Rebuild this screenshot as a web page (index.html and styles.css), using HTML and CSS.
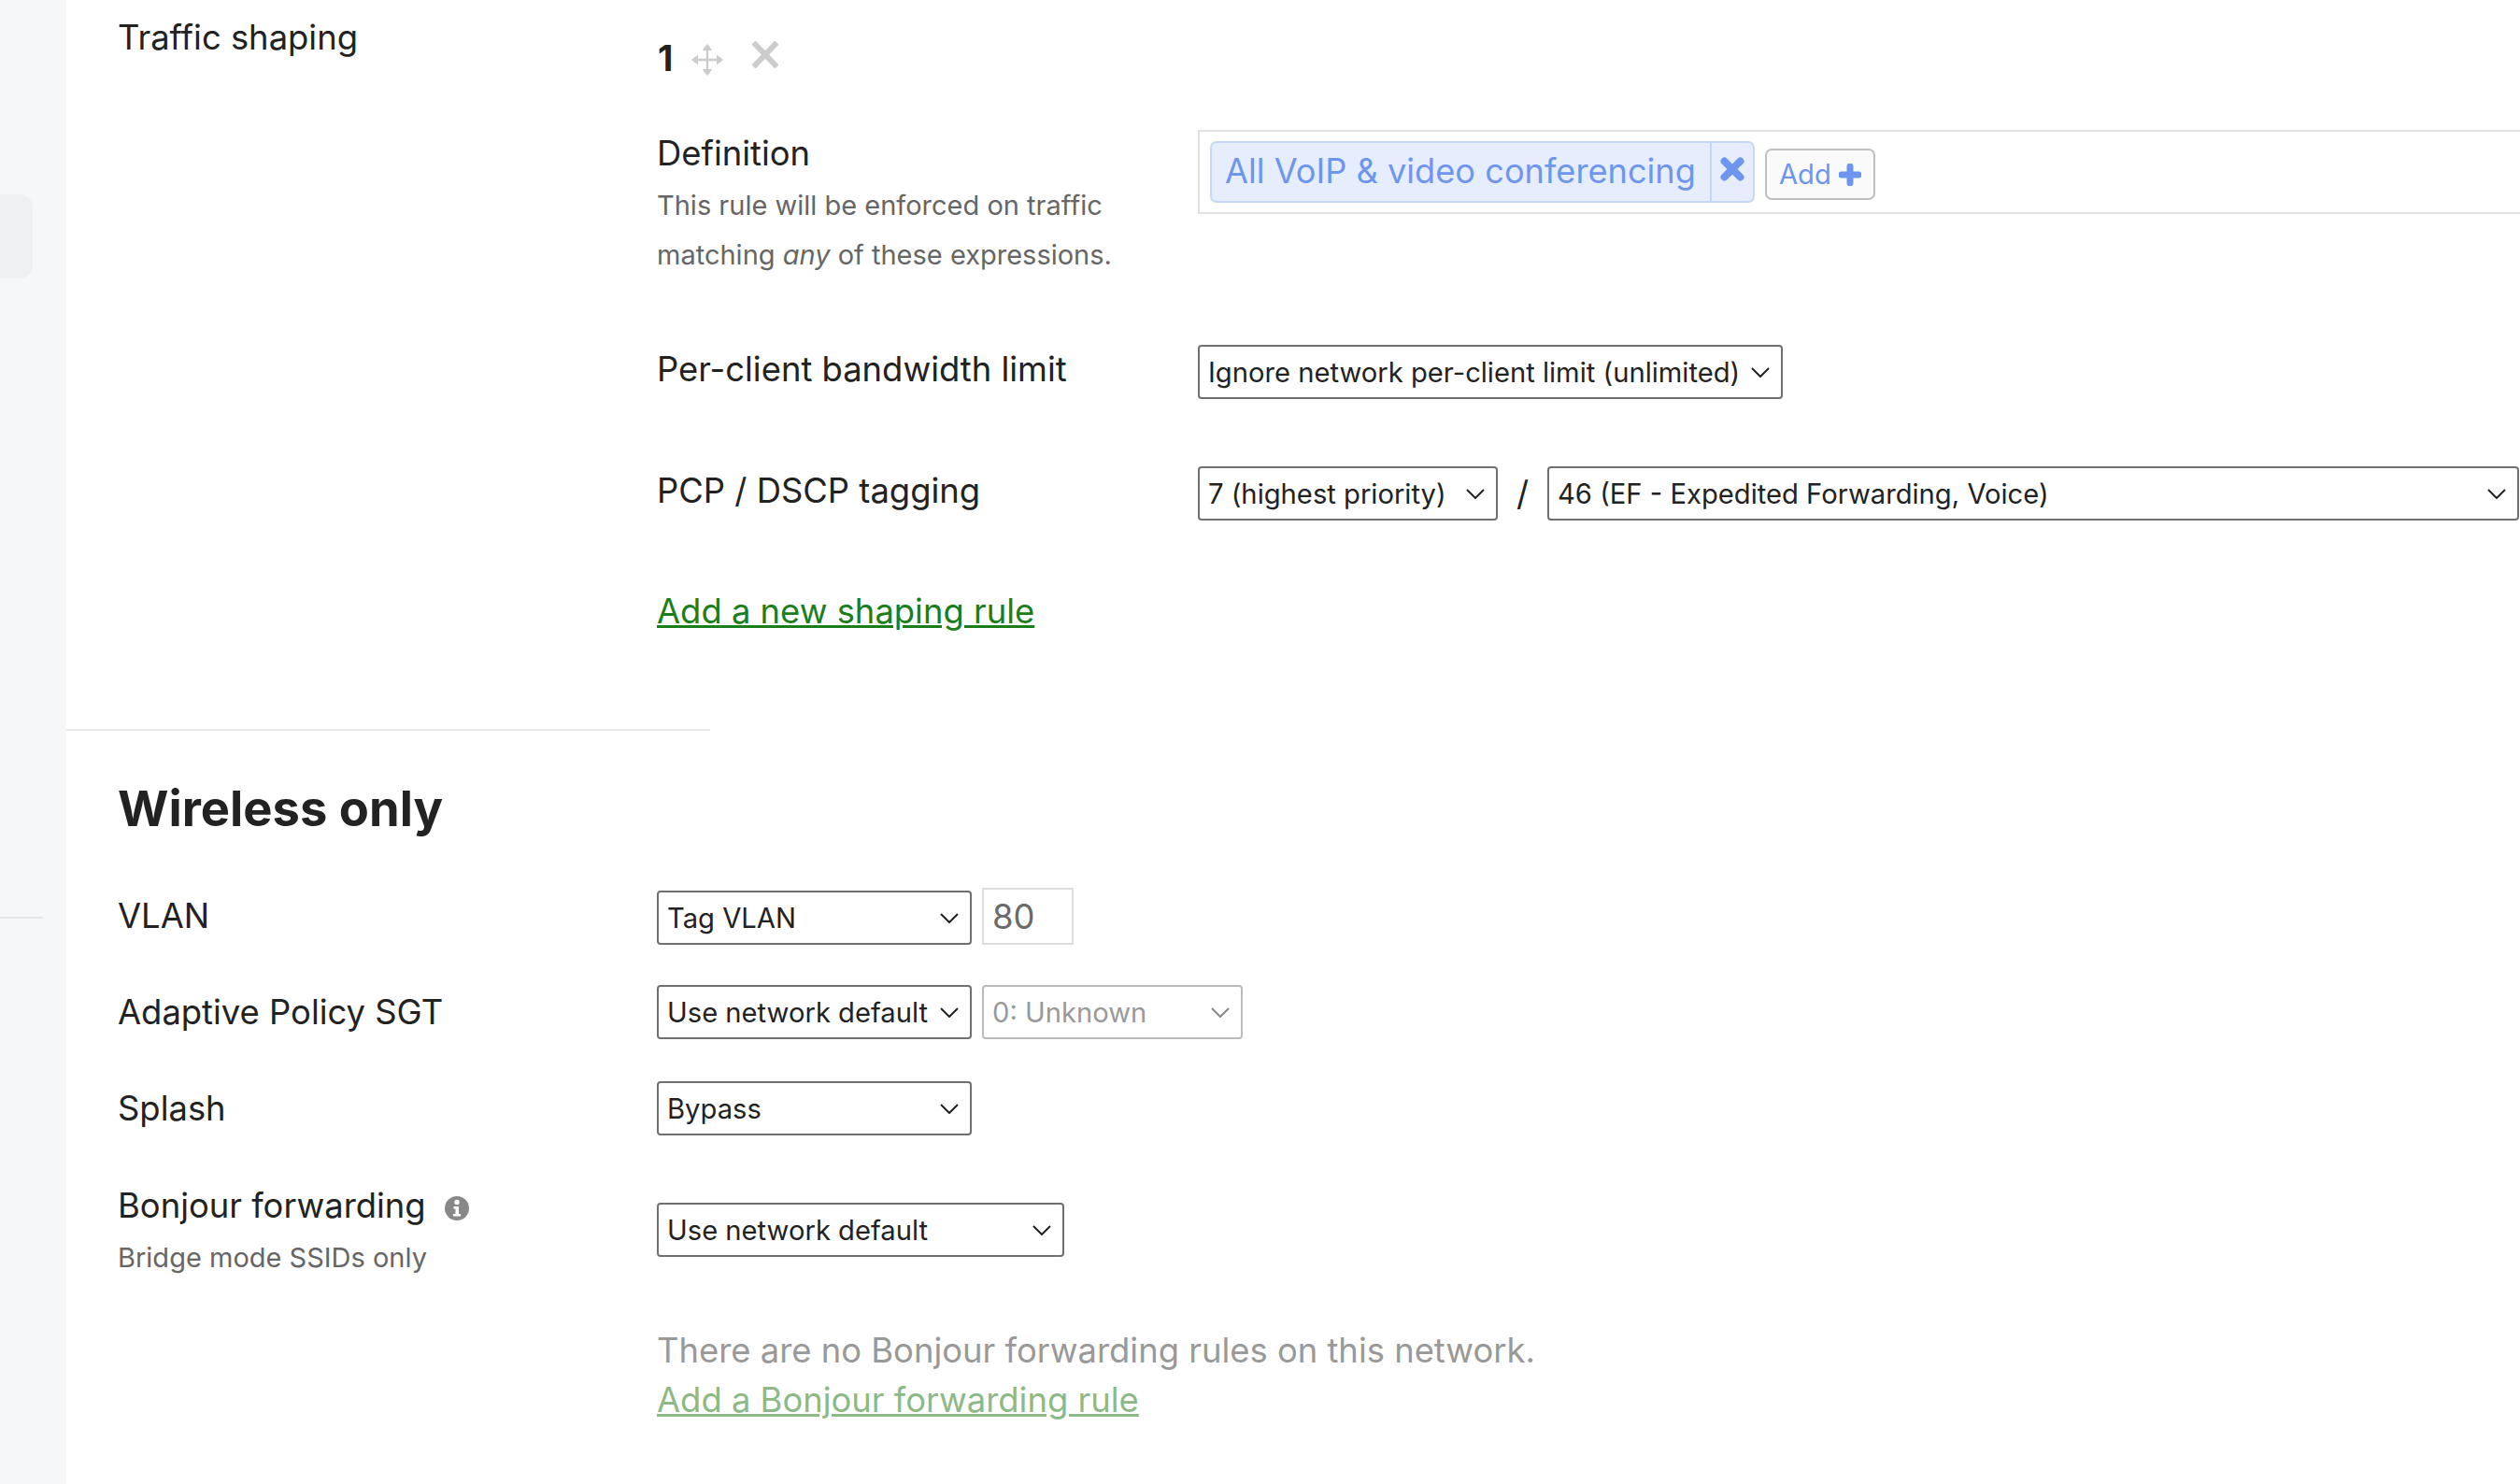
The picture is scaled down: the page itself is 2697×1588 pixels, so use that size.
FILE: index.html
```html
<!DOCTYPE html>
<html lang="en">

<head>
    <meta charset="UTF-8">
    <meta name="viewport" content="width=device-width, initial-scale=1.0">
    <title>Traffic shaping</title>
    <link rel="stylesheet" href="styles.css">
</head>

<body>
    <aside class="sidebar">
        <div class="sidebar-pill"></div>
        <div class="sidebar-line"></div>
    </aside>
    <main class="content">
        <section class="shaping">
            <h3 class="label">Traffic shaping</h3>
            <div class="rule">
                <div class="rule-head">
                    <b class="rule-num">1</b>
                    <svg class="icon-move" viewBox="0 0 34 34" aria-hidden="true">
                        <path d="M17 3v28M3 17h28" stroke="#ccc" stroke-width="2.4" fill="none" />
                        <path d="M17 0l5.500 7h-11zM17 34l5.500-7h-11zM0 17l7-5.500v11zM34 17l-7-5.500v11z" fill="#ccc" />
                    </svg>
                    <svg class="icon-remove" viewBox="0 0 28 29" aria-hidden="true">
                        <path d="M1.500 1.500l25 26M26.500 1.500l-25 26" stroke="#ccc" stroke-width="6" fill="none" />
                    </svg>
                </div>

                <div class="rule-row rule-row-def">
                    <div>
                        <div class="rule-title">Definition</div>
                        <p class="rule-help">This rule will be enforced on traffic<br>matching <i>any</i> of these expressions.</p>
                    </div>
                    <div class="def-box">
                        <span class="chip">
                            <span class="chip-text">All VoIP &amp; video conferencing</span>
                            <span class="chip-close">
                                <svg viewBox="0 0 26 26" aria-hidden="true">
                                    <path d="M4.500 4.500l17 17M21.500 4.500l-17 17" stroke="#6f96ef" stroke-width="8" stroke-linecap="round" fill="none" />
                                </svg>
                            </span>
                        </span>
                        <button class="add-btn" type="button">Add
                            <svg viewBox="0 0 24 24" aria-hidden="true">
                                <path d="M12 3v18M3 12h18" stroke="#6f96ef" stroke-width="7" stroke-linecap="round" fill="none" />
                            </svg>
                        </button>
                    </div>
                </div>

                <div class="rule-row">
                    <div class="rule-title rule-title-sel">Per-client bandwidth limit</div>
                    <div>
                        <select class="sel sel-limit">
                            <option>Ignore network per-client limit (unlimited)</option>
                        </select>
                    </div>
                </div>

                <div class="rule-row">
                    <div class="rule-title rule-title-sel">PCP / DSCP tagging</div>
                    <div class="tagging">
                        <select class="sel sel-pcp">
                            <option>7 (highest priority)</option>
                        </select>
                        <span class="slash">/</span>
                        <select class="sel sel-dscp">
                            <option>46 (EF - Expedited Forwarding, Voice)</option>
                        </select>
                    </div>
                </div>

                <a class="add-link" href="#">Add a new shaping rule</a>
            </div>
        </section>

        <hr class="divider">

        <section class="wireless">
            <h2>Wireless only</h2>

            <div class="form-row form-row-vlan">
                <div class="label label-vlan">VLAN</div>
                <div class="controls">
                    <select class="sel sel-short">
                        <option>Tag VLAN</option>
                    </select>
                    <input class="vlan-input" type="text" value="80">
                </div>
            </div>

            <div class="form-row form-row-sgt">
                <div class="label label-sel">Adaptive Policy SGT</div>
                <div class="controls">
                    <select class="sel sel-short">
                        <option>Use network default</option>
                    </select>
                    <select class="sel sel-sgt" disabled>
                        <option>0: Unknown</option>
                    </select>
                </div>
            </div>

            <div class="form-row form-row-splash">
                <div class="label label-sel">Splash</div>
                <div class="controls">
                    <select class="sel sel-short">
                        <option>Bypass</option>
                    </select>
                </div>
            </div>

            <div class="form-row">
                <div>
                    <div class="label">Bonjour forwarding
                        <svg class="icon-info" viewBox="0 0 26 26" aria-hidden="true">
                            <circle cx="13" cy="13" r="13" fill="#888" />
                            <circle cx="13" cy="6.500" r="2.700" fill="#fff" />
                            <path d="M9.500 11h5.500v8h2v2.500H9v-2.500h2.500v-5.500h-2z" fill="#fff" />
                        </svg>
                    </div>
                    <div class="label-help">Bridge mode SSIDs only</div>
                </div>
                <div>
                    <select class="sel sel-bonjour">
                        <option>Use network default</option>
                    </select>
                    <p class="no-rules">There are no Bonjour forwarding rules on this network.<br><a href="#">Add a Bonjour forwarding rule</a></p>
                </div>
            </div>
        </section>
    </main>
</body>

</html>
```

FILE: styles.css
```css
html {
    box-sizing: border-box;
    font-family: Inter, "Noto Sans", sans-serif;
    font-size: 36.4px;
}

*,
*:before,
*:after {
    box-sizing: inherit;
}

body {
    margin: 0;
    height: 100vh;
    display: flex;
    overflow: hidden;
    background-color: #fff;
    color: #222;
}

.sidebar {
    flex: 0 0 71px;
    padding-top: 208px;
    background-color: #f6f7f8;
}

.sidebar-pill {
    width: 35px;
    height: 90px;
    background-color: #eef0f2;
    border-radius: 0 14px 14px 0;
}

.sidebar-line {
    width: 46px;
    height: 2px;
    margin-top: 683px;
    background-color: #e4e8ec;
}

.content {
    flex: 1;
    min-width: 0;
}

.label,
.rule-title {
    font-size: 36.4px;
    font-weight: 400;
    line-height: 50px;
    margin: 0;
}

.shaping {
    display: grid;
    grid-template-columns: 577px 1fr;
    height: 780px;
    padding: 15px 0 0 55px;
}

.rule-head {
    display: flex;
    align-items: center;
    height: 94px;
    margin-bottom: 30px;
}

.rule-num {
    font-size: 38px;
    font-weight: 700;
    padding-left: 1px;
}

.icon-move {
    width: 34px;
    height: 34px;
    margin: 3px 0 0 20px;
}

.icon-remove {
    width: 28px;
    height: 29px;
    margin: -8px 0 0 31px;
}

.rule-row {
    display: grid;
    grid-template-columns: 579px 1fr;
    margin-bottom: 72px;
}

.rule-row-def {
    margin-bottom: 70px;
}

.rule-title-sel {
    margin-top: 1px;
}

.rule-help {
    margin: 4px 0 0;
    font-size: 29px;
    line-height: 53px;
    color: #666;
}

.def-box {
    display: flex;
    align-items: flex-start;
    height: 90px;
    padding: 10px 0 0 11px;
    border: 2px solid #e0e0e0;
    border-right: 0;
}

.chip {
    display: flex;
    height: 66px;
    background-color: #e6eefd;
    border: 2px solid #c5d8fb;
    border-radius: 7px;
    color: #6f96ef;
}

.chip-text {
    padding: 0 15px 0 14px;
    font-size: 36.2px;
    line-height: 60px;
}

.chip-close {
    width: 46px;
    padding: 15px 0 0 9px;
    border-left: 2px solid #c5d8fb;
}

.chip-close svg {
    display: block;
    width: 26px;
    height: 26px;
}

.add-btn {
    display: flex;
    align-items: center;
    gap: 8px;
    height: 55px;
    margin: 8px 0 0 11px;
    padding: 0 13px;
    background-color: #fafafa;
    border: 2px solid #c0c0c0;
    border-radius: 7px;
    font: inherit;
    font-size: 29.2px;
    color: #6f96ef;
}

.add-btn svg {
    width: 24px;
    height: 24px;
}

.sel {
    display: block;
    height: 58px;
    padding: 0 40px 0 9px;
    border: 2px solid #707070;
    border-radius: 4px;
    appearance: none;
    font: inherit;
    font-size: 29.2px;
    color: #222;
    background: #fff url("data:image/svg+xml,%3Csvg xmlns='http://www.w3.org/2000/svg' viewBox='0 0 20 11'%3E%3Cpath d='M1 1l9 9 9-9' fill='none' stroke='%23222' stroke-width='2'/%3E%3C/svg%3E") no-repeat right 12px center / 20px 11px;
}

.sel-limit {
    width: 626px;
}

.tagging {
    display: flex;
    align-items: center;
}

.sel-pcp {
    width: 321px;
}

.slash {
    width: 53px;
    text-align: center;
    font-size: 36.4px;
}

.sel-dscp {
    width: 1040px;
}

.add-link {
    font-size: 36.4px;
    line-height: 50px;
    color: #1a7f1a;
}

.divider {
    width: 689px;
    height: 2px;
    margin: 0;
    border: 0;
    background-color: #eaeaea;
}

.wireless {
    padding: 53px 0 0 55px;
}

.wireless h2 {
    margin: 0 0 58px;
    font-size: 52.5px;
    font-weight: 700;
    line-height: 60px;
}

.form-row {
    display: grid;
    grid-template-columns: 577px 1fr;
}

.form-row-vlan {
    margin-bottom: 43px;
}

.form-row-sgt {
    margin-bottom: 45px;
}

.form-row-splash {
    margin-bottom: 50px;
}

.label-vlan {
    margin-top: 2px;
}

.label-sel {
    margin-top: 4px;
}

.controls {
    display: flex;
    gap: 11px;
}

.sel-short {
    width: 337px;
}

.vlan-input {
    width: 98px;
    height: 61px;
    margin-top: -3px;
    padding: 0 9px;
    border: 2px solid #ddd;
    font: inherit;
    font-size: 36.4px;
    color: #6a6a6a;
}

.sel-sgt {
    width: 279px;
    border-color: #bbb;
    color: #999;
    opacity: 1;
    background-image: url("data:image/svg+xml,%3Csvg xmlns='http://www.w3.org/2000/svg' viewBox='0 0 20 11'%3E%3Cpath d='M1 1l9 9 9-9' fill='none' stroke='%23888' stroke-width='2'/%3E%3C/svg%3E");
}

.icon-info {
    width: 26px;
    height: 26px;
    margin-left: 10px;
    vertical-align: -3px;
}

.label-help {
    margin-top: 11px;
    font-size: 29px;
    line-height: 40px;
    color: #666;
}

.sel-bonjour {
    width: 436px;
    margin-top: 22px;
}

.no-rules {
    margin: 74px 0 0;
    font-size: 36.4px;
    line-height: 53px;
    color: #999;
}

.no-rules a {
    color: #8db987;
}
```
